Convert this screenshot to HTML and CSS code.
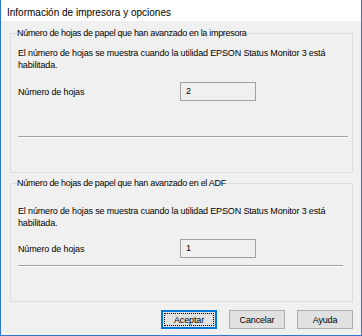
FILE: index.html
```html
<!DOCTYPE html>
<html lang="es">
<head>
<meta charset="utf-8">
<link rel="stylesheet" href="styles.css">
</head>
<body>
<div class="window">
  <div class="titlebar">Información de impresora y opciones</div>
  <div class="content">
    <fieldset class="group group-1">
      <legend>Número de hojas de papel que han avanzado en la impresora</legend>
      <p class="desc">El número de hojas se muestra cuando la utilidad EPSON Status Monitor 3 está habilitada.</p>
      <div class="row">
        <span class="label">Número de hojas</span>
        <span class="field">2</span>
      </div>
      <div class="sep sep-1"></div>
    </fieldset>
    <fieldset class="group group-2">
      <legend>Número de hojas de papel que han avanzado en el ADF</legend>
      <p class="desc">El número de hojas se muestra cuando la utilidad EPSON Status Monitor 3 está habilitada.</p>
      <div class="row">
        <span class="label">Número de hojas</span>
        <span class="field">1</span>
      </div>
      <div class="sep sep-2"></div>
    </fieldset>
    <div class="buttons">
      <button class="btn btn-default"><span class="focus">Aceptar</span></button>
      <button class="btn">Cancelar</button>
      <button class="btn">Ayuda</button>
    </div>
  </div>
</div>
</body>
</html>
```

FILE: styles.css
```css
* { box-sizing: border-box; }
html, body { margin: 0; padding: 0; }
body {
  font-family: "Liberation Sans", Arial, sans-serif;
  font-size: 9px;
  letter-spacing: -0.15px;
  color: #000;
  background: #fff;
}
.window {
  width: 362px;
  height: 336px;
  border: 1px solid #2b79d0;
  border-top: 0;
  background: #f0f0f0;
  display: flex;
  flex-direction: column;
}
.titlebar {
  height: 21px;
  background: #fff;
  font-size: 10px;
  letter-spacing: 0;
  line-height: 19px;
  padding-top: 3px;
  padding-left: 6px;
  flex: none;
}
.content {
  padding: 6px 8px 0 9px;
  display: flex;
  flex-direction: column;
}
.group {
  margin: 0;
  border: 1px solid #dcdcdc;
  padding: 0 0 0 7px;
  min-width: 0;
  width: 343px;
}
.group legend {
  padding: 0;
  margin-left: -1px;
  line-height: 12px;
  letter-spacing: -0.3px;
}
.group-1 { height: 146px; }
.group-2 { height: 125px; margin-top: 4px; }
.desc {
  margin: 0;
  line-height: 12px;
  width: 330px;
}
.group-1 .desc { margin-top: 8px; }
.group-2 .desc { margin-top: 16px; }
.row {
  display: flex;
  align-items: center;
  height: 19px;
}
.group-1 .row { margin-top: 11px; }
.group-2 .row { margin-top: 10px; }
.label { width: 162px; }
.field {
  width: 76px;
  height: 19px;
  border: 1px solid #a0a0a0;
  background: #f0f0f0;
  padding-left: 5px;
  line-height: 17px;
}
.sep {
  height: 2px;
  border-top: 1px solid #a0a0a0;
  border-bottom: 1px solid #fff;
}
.sep-1 { width: 330px; margin-top: 35px; }
.sep-2 { width: 325px; margin-top: 7px; }
.buttons {
  display: flex;
  justify-content: flex-end;
  gap: 12px;
  margin-top: 8px;
  width: 343px;
}
.btn {
  width: 56px;
  height: 19px;
  border: 1px solid #adadad;
  background: #e1e1e1;
  font-family: "Liberation Sans", Arial, sans-serif;
  font-size: 9px;
  letter-spacing: -0.15px;
  color: #000;
  padding: 0;
  margin: 0;
  display: flex;
  align-items: center;
  justify-content: center;
}
.btn-default {
  border: 2px solid #0078d7;
  padding: 1px;
}
.focus {
  flex: 1;
  align-self: stretch;
  border: 1px dotted #000;
  display: flex;
  align-items: center;
  justify-content: center;
}
```
